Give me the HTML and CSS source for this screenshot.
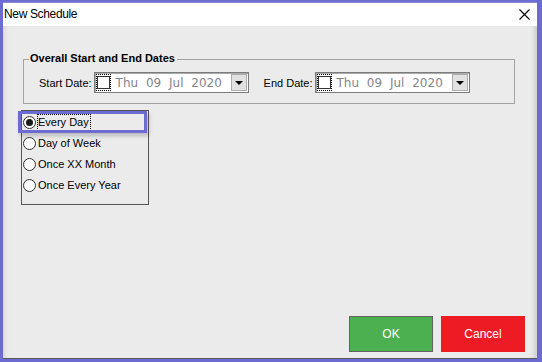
FILE: index.html
```html
<!DOCTYPE html>
<html lang="en">
<head>
  <meta charset="UTF-8">
  <title>New Schedule</title>
  <link rel="stylesheet" href="styles.css">
</head>
<body>
  <div class="frame">
    <div class="window">
      <div class="title-bar">
        <span class="title">New Schedule</span>
        <svg class="close" width="11" height="11" viewBox="0 0 11 11">
          <path d="M0.5 0.5 L10.5 10.5 M10.5 0.5 L0.5 10.5" stroke="#000" stroke-width="1.1" fill="none"/>
        </svg>
      </div>

      <div class="content">
        <!-- Overall dates group -->
        <div class="group">
          <span class="group-title">Overall Start and End Dates</span>
          <div class="date-row">
            <label class="date-label">Start Date:</label>
            <div class="picker">
              <span class="check-focus"><span class="check"></span></span>
              <span class="date-text">Thu 09 Jul 2020</span>
              <span class="drop"><span class="arrow"></span></span>
            </div>
            <label class="date-label end">End Date:</label>
            <div class="picker">
              <span class="check-focus"><span class="check"></span></span>
              <span class="date-text">Thu 09 Jul 2020</span>
              <span class="drop"><span class="arrow"></span></span>
            </div>
          </div>
        </div>

        <!-- Schedule type -->
        <div class="radio-box">
          <div class="radio-item active">
            <span class="radio checked"></span>
            <span class="radio-text focus">Every Day</span>
            <span class="highlight"></span>
          </div>
          <div class="radio-item">
            <span class="radio"></span>
            <span class="radio-text">Day of Week</span>
          </div>
          <div class="radio-item">
            <span class="radio"></span>
            <span class="radio-text">Once XX Month</span>
          </div>
          <div class="radio-item">
            <span class="radio"></span>
            <span class="radio-text">Once Every Year</span>
          </div>
        </div>

        <div class="buttons">
          <button class="btn ok">OK</button>
          <button class="btn cancel">Cancel</button>
        </div>
      </div>
    </div>
  </div>
</body>
</html>
```
FILE: styles.css
```css
body {
  margin: 0;
  background: #6b6bd1;
  font-family: "Liberation Sans", Arial, sans-serif;
}
.frame {
  width: 542px;
  height: 362px;
  box-sizing: border-box;
  padding: 2px 5px 3px 3px;
}
.window {
  height: 100%;
  display: flex;
  flex-direction: column;
  background: #ebebeb;
}
.title-bar {
  height: 24px;
  background: #fff;
  display: flex;
  align-items: center;
  justify-content: space-between;
  padding: 0 7px 0 1px;
  flex-shrink: 0;
  box-shadow: inset 0 1px 0 #8a8ad8;
}
.title {
  font-size: 12px;
  letter-spacing: -0.35px;
  color: #000;
}
.close {
  display: block;
  margin-top: 1px;
}
.content {
  flex: 1;
  display: flex;
  flex-direction: column;
  border-bottom: 1px solid #5a5a5a;
  box-shadow: inset 5px 0 4px -3px rgba(0,0,0,0.09), inset -6px 0 4px -3px rgba(0,0,0,0.12);
}
.group {
  position: relative;
  margin: 33px 22px 0 20px;
  height: 45px;
  box-sizing: border-box;
  border: 1px solid #a3a3a3;
  padding: 12px 0 0 15px;
}
.group-title {
  position: absolute;
  top: -8px;
  left: 5px;
  padding: 0 2px 0 1px;
  background: #ebebeb;
  font-size: 11px;
  font-weight: bold;
  color: #000;
}
.date-row {
  display: flex;
  align-items: center;
}
.date-label {
  font-size: 11px;
  color: #000;
  margin-right: 2px;
  padding-top: 1px;
}
.date-label.end {
  margin-left: 15px;
}
.picker {
  width: 155px;
  height: 21px;
  box-sizing: border-box;
  border: 1px solid #7c7c7c;
  box-shadow: inset 1px 1px 0 #a9a9a9;
  background: #fff;
  display: flex;
  align-items: center;
  padding-left: 1px;
}
.check-focus {
  width: 15px;
  height: 17px;
  box-sizing: border-box;
  border: 1px dotted #000;
  display: flex;
  align-items: center;
  justify-content: center;
}
.check {
  width: 13px;
  height: 13px;
  box-sizing: border-box;
  border: 1px solid #333;
  background: #fff;
}
.date-text {
  font-family: "DejaVu Sans", sans-serif;
  font-size: 12px;
  color: #84848c;
  word-spacing: 4px;
  margin-left: 5px;
  flex: 1;
}
.drop {
  width: 16px;
  height: 17px;
  box-sizing: border-box;
  border: 1px solid #adadad;
  background: #e1e1e1;
  display: flex;
  align-items: center;
  justify-content: center;
  margin-right: 1px;
}
.arrow {
  width: 0;
  height: 0;
  border-left: 4px solid transparent;
  border-right: 4px solid transparent;
  border-top: 4px solid #000;
}
.radio-box {
  margin: 6px 0 0 18px;
  width: 128px;
  height: 95px;
  box-sizing: border-box;
  border: 1px solid #555;
  padding-top: 1px;
}
.radio-item {
  position: relative;
  height: 21px;
  display: flex;
  align-items: center;
  padding-left: 1px;
}
.radio {
  width: 13px;
  height: 13px;
  box-sizing: border-box;
  border: 1px solid #333;
  border-radius: 50%;
  background: #fff;
  display: flex;
  align-items: center;
  justify-content: center;
}
.radio.checked::after {
  content: "";
  width: 7px;
  height: 7px;
  border-radius: 50%;
  background: #1a1a1a;
}
.radio-text {
  font-size: 11px;
  color: #000;
  margin-left: 1px;
  padding: 1px 1px 2px 0;
  border: 1px solid transparent;
}
.radio-text.focus {
  border: 1px dotted #000;
}
.highlight {
  position: absolute;
  left: -4px;
  top: -1px;
  width: 129px;
  height: 22px;
  box-sizing: border-box;
  border: 3px solid #6b6bd1;
  box-shadow: 2px 3px 4px rgba(0,0,0,0.2);
}
.buttons {
  margin-top: auto;
  display: flex;
  justify-content: flex-end;
  gap: 8px;
  padding: 0 12px 6px 0;
}
.btn {
  width: 84px;
  height: 36px;
  font-family: "Liberation Sans", Arial, sans-serif;
  font-size: 12px;
  color: #fff;
  border: none;
  cursor: pointer;
}
.ok {
  background: #4caf50;
  border: 1px solid #636363;
}
.cancel {
  background: #ed1c24;
}
```
